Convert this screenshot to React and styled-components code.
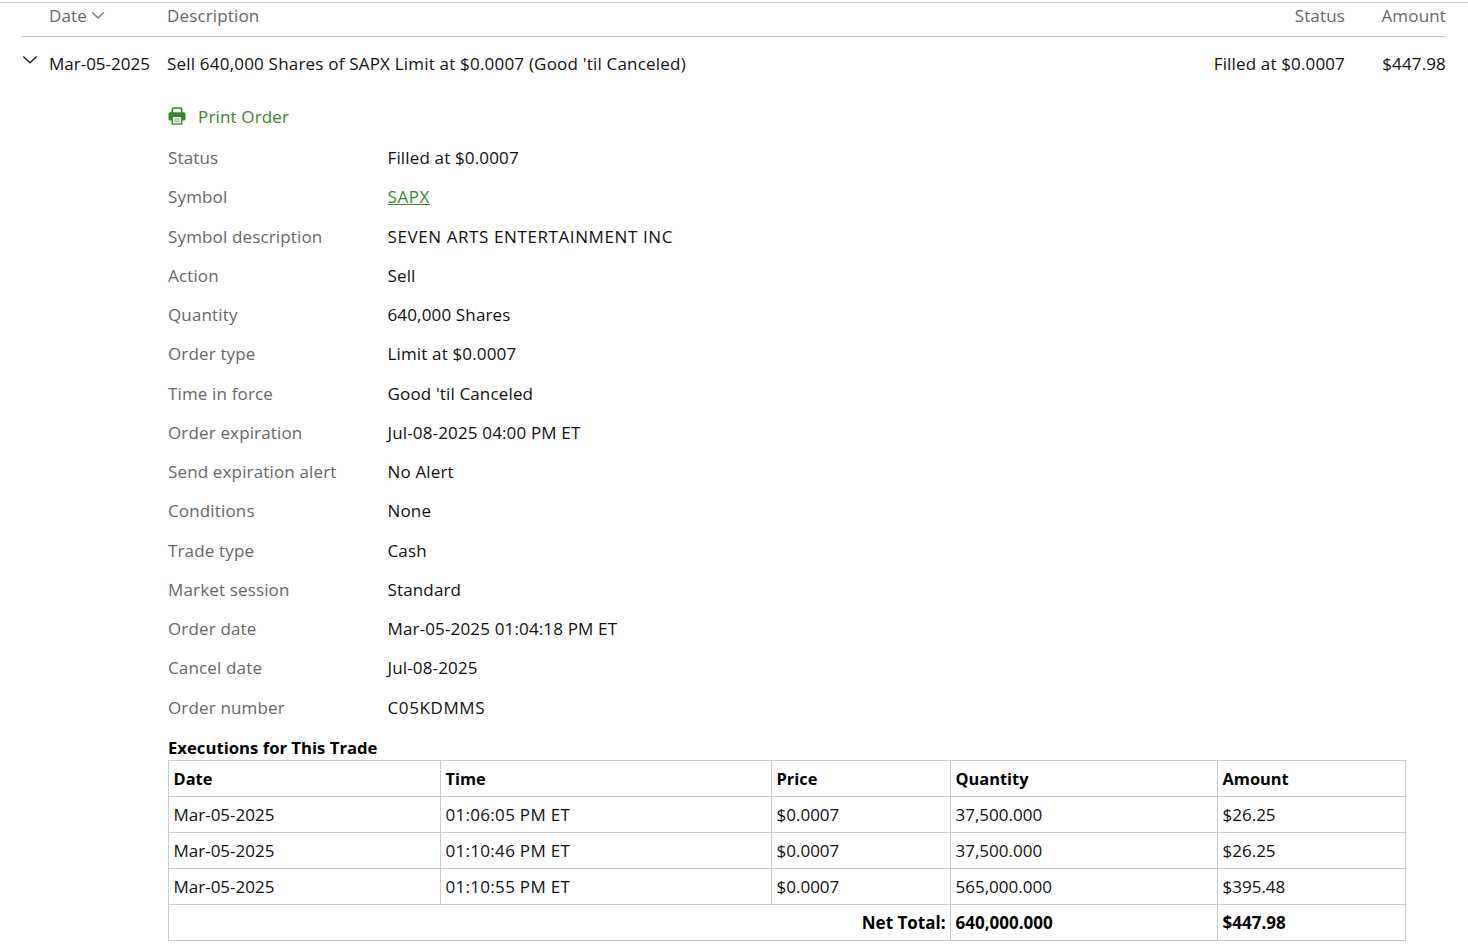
import React from "react";
import styled, { createGlobalStyle } from "styled-components";

const Global = createGlobalStyle`
  html, body { margin: 0; padding: 0; background: #fff; }
  body { font-family: "Open Sans", Lato, "Liberation Sans", sans-serif; font-size: 17px; letter-spacing: 0.15px; color: #0f0f0f; }
`;
const Page = styled.div`
  width: 1468px; height: 947px; overflow: hidden; box-sizing: border-box;
  padding-top: 2px;
`;
const TopRule = styled.div`height: 1px; background: #ccc;`;
const Grid = styled.div`
  display: grid; grid-template-columns: 28px 118px 1fr 190px 101px;
  margin: 0 22px 0 21px;
`;
const HeadRow = styled(Grid)`
  height: 34px; align-items: center; color: #666; border-bottom: 1px solid #ccc; padding-bottom: 9px; box-sizing: border-box;
`;
const OrderRow = styled(Grid)`height: 54px; align-items: center; padding-bottom: 2px; box-sizing: border-box;`;
const Right = styled.div`text-align: right;`;
const DateHead = styled.div`display: flex; align-items: center; gap: 4px;`;
const Toggle = styled.div`display: flex; align-items: center; margin-top: -6px; margin-left: 1px;`;
const OrderDate = styled.div`letter-spacing: 0;`;
const OrderText = styled.div`letter-spacing: 0.2px; white-space: nowrap;`;
const Detail = styled.div`padding-left: 168px;`;
const PrintLink = styled.div`
  display: flex; align-items: center; gap: 12px; height: 28px; margin-top: 11px; color: #368727;
`;
const Rows = styled.dl`
  margin: 8px 0 0; display: grid; grid-template-columns: 219.5px 1fr; grid-auto-rows: 39.25px; align-items: center;
`;
const Label = styled.dt`color: #666;`;
const Value = styled.dd`margin: 0; letter-spacing: ${p => (p.$caps ? "0.6px" : "inherit")};`;
const SymbolLink = styled.span`color: #368727; text-decoration: underline;`;
const Title = styled.div`font-weight: 700; font-size: 16.7px; letter-spacing: 0; color: #000; height: 22px; line-height: 22px; margin-top: 10.500px;`;
const Table = styled.table`
  border-collapse: collapse; table-layout: fixed; width: 1238px; margin-top: 1px; border: 1px solid #ccc;
`;
const Cell = styled.td`
  border: 1px solid #ccc; height: 36px; padding: 0 4.5px; box-sizing: border-box;
  text-align: ${p => (p.$right ? "right" : "left")};
  font-weight: ${p => (p.$bold ? 700 : 400)};
  letter-spacing: ${p => (p.$tight || p.$bold ? 0 : "0.3px")};
  color: ${p => (p.$bold ? "#000" : "inherit")};
`;
const HeadCell = styled(Cell).attrs({ as: "th", $bold: true })`font-size: 16.4px;`;

const Chevron = ({ size = 16, color = "#666", weight = 1.5 }) => (
  <svg width={size} height={size * 0.6} viewBox="0 0 16 10" fill="none">
    <path d="M1 1.5 L8 8.2 L15 1.5" stroke={color} strokeWidth={weight} />
  </svg>
);
const Printer = () => (
  <svg width="18" height="18" viewBox="0 0 18 18">
    <path d="M4.3 6V2.600a1.600 1.600 0 0 1 1.600-1.600h6.200a1.600 1.600 0 0 1 1.600 1.600V6" fill="none" stroke="#368727" strokeWidth="1.700" />
    <rect x="0.500" y="5.200" width="17" height="8.300" rx="1.600" fill="#368727" />
    <rect x="3.500" y="8.700" width="11" height="9" fill="#368727" />
    <rect x="4.900" y="10" width="8.200" height="6.400" fill="#e6f0e3" />
    <rect x="6.600" y="11.500" width="4.800" height="1" fill="#7fb175" />
    <rect x="6.600" y="13.700" width="4.800" height="1" fill="#7fb175" />
  </svg>
);

const details = [
  ["Status", "Filled at $0.0007"],
  ["Symbol", <SymbolLink key="s">SAPX</SymbolLink>, true],
  ["Symbol description", "SEVEN ARTS ENTERTAINMENT INC", true],
  ["Action", "Sell"],
  ["Quantity", "640,000 Shares"],
  ["Order type", "Limit at $0.0007"],
  ["Time in force", "Good 'til Canceled"],
  ["Order expiration", "Jul-08-2025 04:00 PM ET"],
  ["Send expiration alert", "No Alert"],
  ["Conditions", "None"],
  ["Trade type", "Cash"],
  ["Market session", "Standard"],
  ["Order date", "Mar-05-2025 01:04:18 PM ET"],
  ["Cancel date", "Jul-08-2025"],
  ["Order number", "C05KDMMS", true],
];
const executions = [
  ["Mar-05-2025", "01:06:05 PM ET", "$0.0007", "37,500.000", "$26.25"],
  ["Mar-05-2025", "01:10:46 PM ET", "$0.0007", "37,500.000", "$26.25"],
  ["Mar-05-2025", "01:10:55 PM ET", "$0.0007", "565,000.000", "$395.48"],
];
const heads = ["Date", "Time", "Price", "Quantity", "Amount"];
const widths = [272, 331, 179, 267, 188];

export default function App() {
  return (
    <Page>
      <Global />
      <TopRule />
      <HeadRow>
        <div />
        <DateHead>Date <Chevron size={14} weight={2} color="#888" /></DateHead>
        <div>Description</div>
        <Right>Status</Right>
        <Right>Amount</Right>
      </HeadRow>
      <OrderRow>
        <Toggle><Chevron size={16} color="#2b1a33" /></Toggle>
        <OrderDate>Mar-05-2025</OrderDate>
        <OrderText>Sell 640,000 Shares of SAPX Limit at $0.0007 (Good 'til Canceled)</OrderText>
        <Right>Filled at $0.0007</Right>
        <Right>$447.98</Right>
      </OrderRow>
      <Detail>
        <PrintLink><Printer /> Print Order</PrintLink>
        <Rows>
          {details.map(([k, v, caps]) => (
            <React.Fragment key={k}>
              <Label>{k}</Label>
              <Value $caps={caps}>{v}</Value>
            </React.Fragment>
          ))}
        </Rows>
        <Title>Executions for This Trade</Title>
        <Table>
          <colgroup>{widths.map((w, i) => <col key={i} width={w} />)}</colgroup>
          <tbody>
            <tr>{heads.map(h => <HeadCell key={h}>{h}</HeadCell>)}</tr>
            {executions.map(r => (
              <tr key={r[1]}>{r.map((c, i) => <Cell $tight={i !== 1} key={i}>{c}</Cell>)}</tr>
            ))}
            <tr>
              <Cell colSpan={3} $right $bold>Net Total:</Cell>
              <Cell $bold>640,000.000</Cell>
              <Cell $bold>$447.98</Cell>
            </tr>
          </tbody>
        </Table>
      </Detail>
    </Page>
  );
}
